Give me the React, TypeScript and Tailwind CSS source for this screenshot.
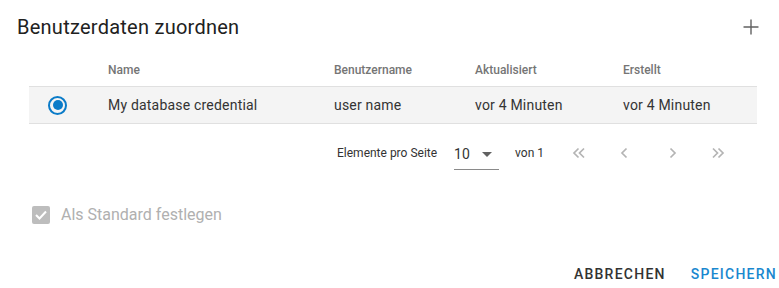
import { Plus } from "lucide-react";

const cols = "grid grid-cols-[79px_226px_141px_148px_1fr]";

function Chevron({ dir, double }: { dir: "left" | "right"; double?: boolean }) {
  const w = double ? 14 : 8;
  const d =
    dir === "left"
      ? double
        ? "M6.5 1.5 2 6 6.5 10.5 M12 1.5 7.5 6 12 10.5"
        : "M6.5 1.5 2 6 6.5 10.5"
      : double
        ? "M2 1.5 6.5 6 2 10.5 M7.5 1.5 12 6 7.5 10.5"
        : "M1.5 1.5 6 6 1.5 10.5";
  return (
    <svg width={w} height="12" viewBox={`0 0 ${w} 12`} fill="none" stroke="#b4b4b4" strokeWidth="1.7">
      <path d={d} />
    </svg>
  );
}

export default function App() {
  return (
    <div className="w-[779px] h-[288px] bg-white font-['Roboto',sans-serif] overflow-hidden">
      <div className="flex items-center justify-between pl-[17px] pr-[16px] pt-[15px] h-[39px]">
        <h2 className="text-[20px] leading-[24px] tracking-[0.25px] text-[#212121]">Benutzerdaten zuordnen</h2>
        <Plus size={24} strokeWidth={1.4} color="#616161" />
      </div>

      <div className="mx-[29px] mt-[15px] w-[728px]">
        <div className={`${cols} h-[32px] items-center text-[12px] font-medium text-[#757575]`}>
          <div />
          <div>Name</div>
          <div>Benutzername</div>
          <div>Aktualisiert</div>
          <div>Erstellt</div>
        </div>
        <div className={`${cols} h-[38px] items-center bg-[#f4f4f4] border-y border-[#e0e0e0] text-[14px] tracking-[0.2px] text-[#333333]`}>
          <div className="pl-[19px] flex items-center">
            <span className="w-[19px] h-[19px] rounded-full border-2 border-[#0a7bc8] flex items-center justify-center">
              <span className="w-[10px] h-[10px] rounded-full bg-[#0a7bc8]" />
            </span>
          </div>
          <div>My database credential</div>
          <div>user name</div>
          <div>vor 4 Minuten</div>
          <div>vor 4 Minuten</div>
        </div>

        <div className="flex items-center h-[58px] text-[12px] text-[#333333]">
          <span className="ml-[308px]">Elemente pro Seite</span>
          <div className="ml-[17px] w-[45px] h-[30px] flex items-center justify-between border-b border-[#8a8a8a] mt-[3px]">
            <span className="text-[14px] leading-none">10</span>
            <span className="mr-[7px] w-0 h-0 border-l-[5px] border-r-[5px] border-t-[5px] border-l-transparent border-r-transparent border-t-[#616161]" />
          </div>
          <span className="ml-[16px]">von 1</span>
          <div className="flex items-center">
            <span className="ml-[28px] flex"><Chevron dir="left" double /></span>
            <span className="ml-[34px] flex"><Chevron dir="left" /></span>
            <span className="ml-[41px] flex"><Chevron dir="right" /></span>
            <span className="ml-[34px] flex"><Chevron dir="right" double /></span>
          </div>
        </div>
      </div>

      <label className="flex items-center gap-[11px] ml-[32px] mt-[21px]">
        <span className="w-[18px] h-[18px] rounded-[2px] bg-[#bdbdbd] flex items-center justify-center">
          <svg width="12" height="10" viewBox="0 0 12 10" fill="none" stroke="white" strokeWidth="2">
            <path d="M1 5 4.5 8.5 11 1.5" />
          </svg>
        </span>
        <span className="text-[16px] text-[#b0b0b0]">Als Standard festlegen</span>
      </label>

      <div className="flex justify-end items-center gap-[25px] pr-[2px] mt-[37px] text-[14px] font-medium tracking-[1.25px]">
        <button className="text-[#333333]">ABBRECHEN</button>
        <button className="text-[#1a88cf]">SPEICHERN</button>
      </div>
    </div>
  );
}
